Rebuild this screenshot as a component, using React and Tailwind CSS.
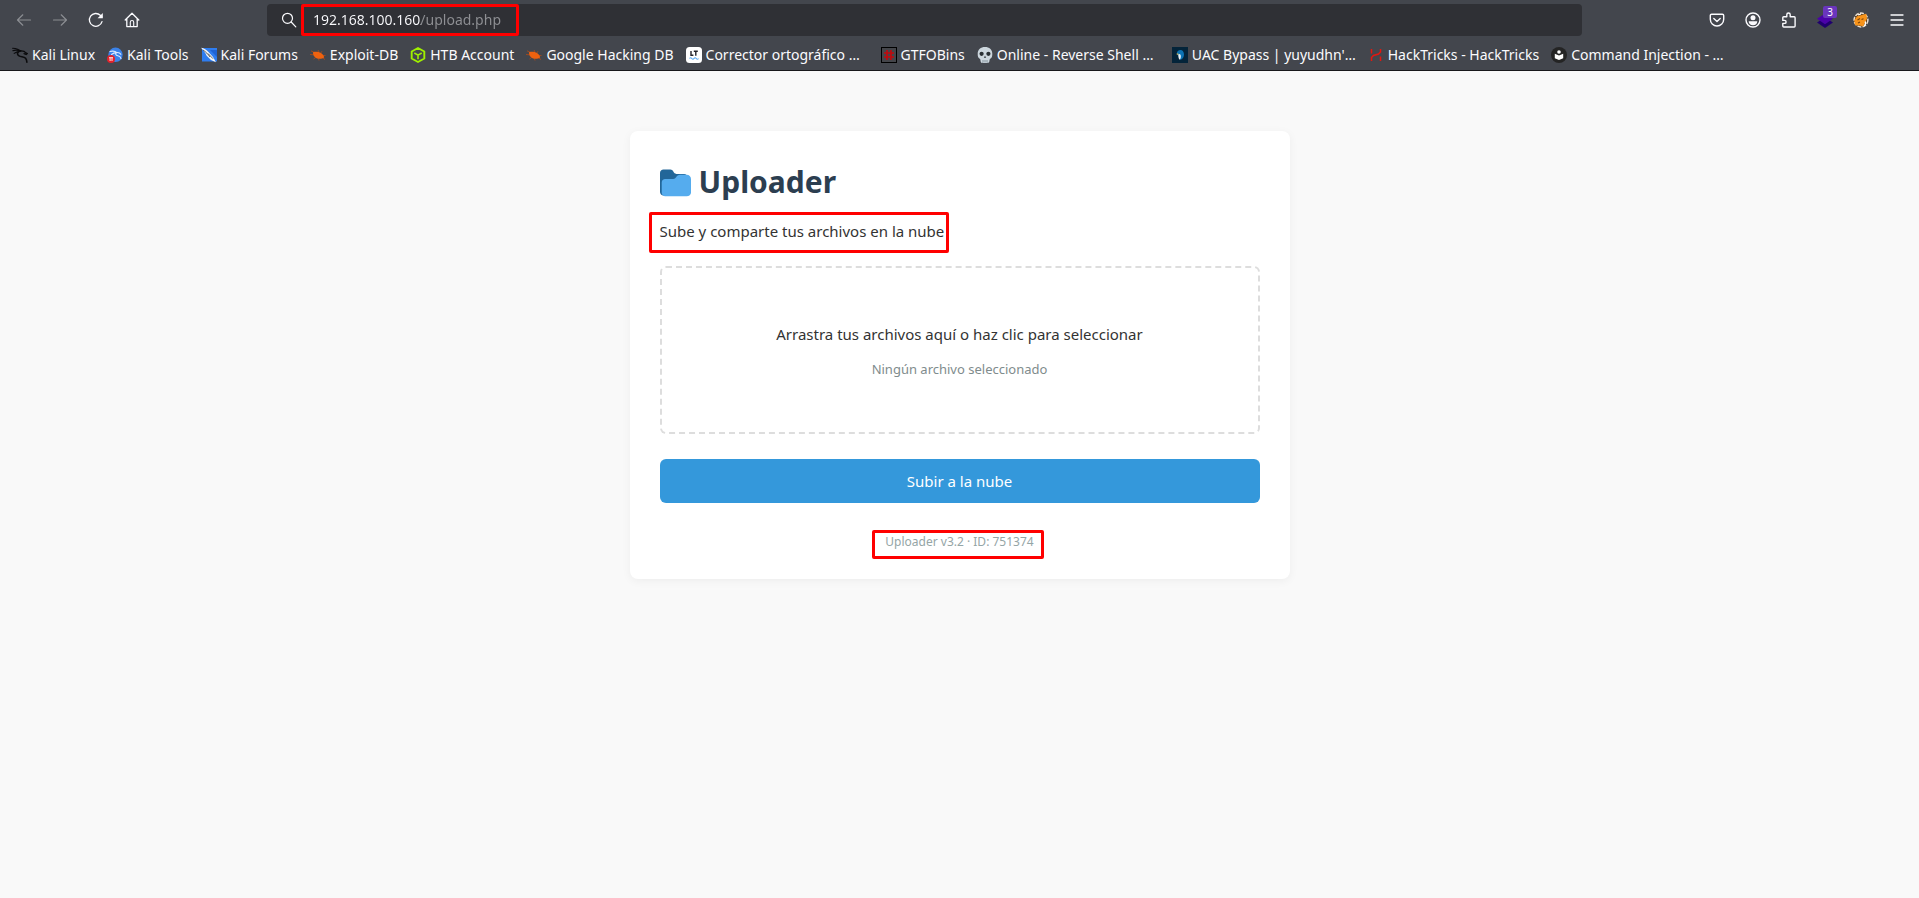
const svgProps = { width: 16, height: 16, viewBox: '0 0 16 16', fill: 'none', 'aria-hidden': true };
const line = { stroke: 'currentColor', strokeWidth: 1.2, strokeLinecap: 'round', strokeLinejoin: 'round' };

const BackIcon = () => (
  <svg {...svgProps} {...line}><path d="M14.500 8H1.500M6.800 2.800 1.500 8l5.300 5.200" /></svg>
);
const ForwardIcon = () => (
  <svg {...svgProps} {...line}><path d="M1.500 8h13M9.200 2.800 14.500 8l-5.300 5.200" /></svg>
);
const ReloadIcon = () => (
  <svg {...svgProps} {...line} strokeWidth={1.3}>
    <path d="M14 9.600A6.400 6.400 0 1 1 12.300 3.300L13.800 4.800" />
    <path d="M14.800 1v5.200H9.600z" fill="currentColor" stroke="none" />
  </svg>
);
const HomeIcon = () => (
  <svg {...svgProps} {...line} strokeWidth={1.3}>
    <path d="M1.200 8 8 1.200 14.800 8M2.800 6.800v7.800h10.400V6.800" />
    <path d="M6.300 14.400V10.200a1.700 1.700 0 0 1 3.400 0v4.200" strokeWidth={1.1} />
  </svg>
);
const SearchIcon = () => (
  <svg {...svgProps} {...line}><circle cx="6.500" cy="6.300" r="5" /><path d="m10.200 10 4.600 4.800" /></svg>
);
const PocketIcon = () => (
  <svg {...svgProps} {...line} strokeWidth={1.4}>
    <path d="M2.600 2.200h10.800a1.300 1.300 0 0 1 1.300 1.300v3.800a6.700 6.700 0 0 1-13.400 0V3.500a1.300 1.300 0 0 1 1.300-1.300z" />
    <path d="m4.800 6.400 3.200 3 3.200-3" />
  </svg>
);
const AccountIcon = () => (
  <svg {...svgProps}>
    <circle cx="8" cy="8" r="7" stroke="currentColor" strokeWidth="1.4" />
    <circle cx="8" cy="5.800" r="2.500" fill="currentColor" />
    <path d="M3.700 9.200h8.600c0 2.600-1.900 4-4.300 4s-4.300-1.400-4.300-4z" fill="currentColor" />
  </svg>
);
const ExtensionIcon = () => (
  <svg {...svgProps} {...line} strokeWidth={1.4}>
    <path d="M1.800 8.400V5.700a.9.9 0 0 1 .9-.9h3.100V2.700a1.700 1.700 0 0 1 3.400 0v2.100h4a.9.9 0 0 1 .9.9v8.400a.9.9 0 0 1-.9.9H2.700a.9.9 0 0 1-.9-.9v-2.700h1.800a1.500 1.500 0 0 0 0-3z" />
  </svg>
);
const LayersIcon = () => (
  <svg {...svgProps} overflow="visible">
    <path d="M8 5.500 16 10.500 8 16 0 10.500z" fill="#20006e" />
    <path d="M8 1.500 16 6.800 8 12.300 0 6.800z" fill="#4b02a8" />
  </svg>
);
const FoxIcon = () => (
  <svg {...svgProps}>
    <circle cx="8" cy="8" r="6.900" fill="#5a3a18" stroke="#e9dfd2" strokeWidth="1.500" strokeDasharray="4 1.200" />
    <path d="M1.200 8.500 4 4.200l5-1.200 4.300-1.200.7 4.600-1.800 4-2 3.800-4-.6-4-.4z" fill="#f7931a" />
    <path d="m4.500 8 2.500-1.500M8.500 7.500l2-.7M5 11l2-1" stroke="#7a430c" strokeWidth="1.100" />
    <path d="M12 9.500c1 1 .6 3-.8 4.200M5 3l3-1.200" stroke="#fff" strokeWidth="1.300" />
  </svg>
);
const MenuIcon = () => (
  <svg {...svgProps} {...line} strokeWidth={1.3}><path d="M2 3h12M2 8h12M2 13h12" /></svg>
);

const KaliLinuxIcon = () => (
  <svg {...svgProps} stroke="#0b0b0d" strokeLinecap="round">
    <path d="M.6 1.200C4 1.400 7 2.200 9 4.200M.8 3.700C3 3 6 3 8.600 4.200M2.200 6.400c1.600-1.200 3.400-1.800 5-1.800" strokeWidth="1.100" />
    <path d="M8.300 3.800C5.200 4.600 4.600 7.400 7 8.900c2 1.200 5 .4 6.600 2.300.8 1 1.200 2.300 1.300 4" strokeWidth="1.600" />
    <path d="M8.800 3.900c2.200-.2 4 .5 5 1.900l1.400.7-1 .9-2.200-.7" strokeWidth="1.300" />
  </svg>
);
const KaliToolsIcon = () => (
  <svg {...svgProps}>
    <circle cx="8.500" cy="7.800" r="7.200" fill="#3b82e8" />
    <path d="M3 4.500c3-.8 5.400-.2 7 1.200M4.500 7.500c2-1.600 4-2 5.500-1.800M9.500 5.500c-1.800 1.400-.6 3 1.300 3.300 1.600.3 2.800 1.200 3.200 2.900M10 5.500c1.600-.2 3 .4 3.800 1.800" stroke="#dbe9ff" strokeWidth="1.100" strokeLinecap="round" />
    <circle cx="4" cy="12" r="4" fill="#e3222b" />
    <path d="M2 10.700h4M3.100 10.900V14M5 10.900V14" stroke="#fff" strokeWidth=".9" />
  </svg>
);
const KaliForumsIcon = () => (
  <svg {...svgProps}>
    <path d="M1 1h15v13.500H1z" fill="#2f7df0" />
    <path d="M9 3h7v7z" fill="#1f63d4" />
    <path d="M0 .8c3 .5 5.500 2 7.500 4.200L12 10l3 5.200-5-2.200-4.500-4.500C4.500 6 2.500 3.500 0 .8z" fill="#f4f6f8" />
    <path d="M2 3c3 2 5 4.200 7 7M7 6.500l5 5.200" stroke="#23262d" strokeWidth=".7" />
  </svg>
);
const ExploitIcon = () => (
  <svg {...svgProps}>
    <path d="m1 3.800 3.500 1.700M0 7.500l3.500.3M3.500 12l2.200-1.500M8 3l1 2M12 4.200 10.800 6M15.500 8.500l-2.500.2M15 12.500l-2.500-1.600M9 13.500l-.4-1.600" stroke="#a84a1c" strokeWidth=".9" />
    <path d="M3 5.200c2.500-.8 5.600-.6 8 .9 1.700 1.100 2.900 2.500 3.100 4.300-1.700 1.500-5 1.900-7.600.9C4.400 10.300 2.700 8 3 5.200z" fill="#f0620f" />
  </svg>
);
const HtbIcon = () => (
  <svg {...svgProps} stroke="#9fef00" strokeWidth="1.900" strokeLinejoin="round">
    <path d="m8 1 6.300 3.500v7L8 15l-6.300-3.500v-7z" />
    <path d="M4.300 6 8 8.100 11.700 6M8 8.100v4.200" strokeWidth="1.600" />
  </svg>
);
const LanguageToolIcon = () => (
  <svg {...svgProps}>
    <rect width="16" height="16" rx="3.500" fill="#fff" />
    <path d="M5 4v4.300h2.400M7.800 4.300h4M9.800 4.300v4.500" stroke="#24242c" strokeWidth="1.400" />
    <path d="M3.500 11.500c.8-1 1.500-1 2.300 0s1.500 1 2.200 0 1.500-1 2.300 0 1.400 1 2.200 0" stroke="#58a9f5" strokeWidth="1.200" />
  </svg>
);
const GtfoIcon = () => (
  <svg {...svgProps}>
    <rect x=".5" y=".5" width="15" height="15" fill="#44454a" stroke="#000" />
    <path d="M6 3v10M10 3v10M3 6h10M3 10h10" stroke="#c4080c" strokeWidth="1.600" />
  </svg>
);
const SkullIcon = () => (
  <svg {...svgProps}>
    <path d="M8 0c4.300 0 7.300 2.700 7.300 6.600 0 1.600-.1 3-.7 4-.5.800-1.400 1-1.800 1.600-.5.700-.1 2.200-.8 3-.5.600-1.500.8-4 .8s-3.500-.2-4-.8c-.7-.8-.3-2.300-.8-3-.4-.6-1.300-.8-1.800-1.600-.6-1-.7-2.400-.7-4C.7 2.700 3.700 0 8 0z" fill="#ccd6dd" />
    <circle cx="4.600" cy="6.800" r="2.100" fill="#292f33" />
    <circle cx="11.400" cy="6.800" r="2.100" fill="#292f33" />
    <path d="m8 8.800 1.200 2H6.800z" fill="#292f33" />
    <path d="M6 13v2.500M8 13v2.500M10 13v2.500" stroke="#66757f" strokeWidth=".7" />
  </svg>
);
const UacIcon = () => (
  <svg {...svgProps}>
    <rect width="16" height="16" fill="#04243a" />
    <path d="M4.800 7C4.800 4.500 6.400 3 8.500 3S12 4.800 12 7.500 10.600 12 8.500 13L6.800 9.500z" fill="#0c73b4" />
    <path d="M6.400 7.200c1.400-.6 2.200.2 2.400 1.600.2 1.600-.2 3.200-1.100 4-1-1-1.500-2.600-1.300-5.600z" fill="#eef3f6" />
    <path d="m6.200 6.200-2 .9 2 .8z" fill="#f2b632" />
  </svg>
);
const HackTricksIcon = () => (
  <svg {...svgProps} stroke="#e3170f" strokeWidth="1.500">
    <path d="M3.500 2v4.500M3.500 14v-3.500l2-2 5-1.500 2-2V2M12.500 14V9.500" />
  </svg>
);
const BookIcon = () => (
  <svg {...svgProps}>
    <circle cx="8" cy="8" r="8" fill="#242424" />
    <circle cx="8" cy="5" r="1.800" fill="#fff" />
    <path d="M3.800 6.800 8 8.600l4.200-1.800v4.400L8 13l-4.200-1.800z" fill="#fff" />
  </svg>
);

const FolderIcon = () => (
  <svg className="size-[31px]" viewBox="0 0 36 36" aria-hidden="true">
    <path d="M0 29c0 2.200 1.800 4 4 4h24c2.200 0 4-1.800 4-4V12c0-2.200-1.800-4-4-4h-9c-3.600 0-3-5-7-5H4C1.800 3 0 4.800 0 7z" fill="#226699" />
    <path d="M31 9h-7.700c-4.400 0-4.600 5-8 5H6c-2.200 0-4 1.800-4 4v12c0 2.200 1.800 4 4 4h25c2.800 0 5-1.800 5-4V14c0-2.800-2.200-5-5-5z" fill="#55acee" />
  </svg>
);

const bookmarks = [
  { name: 'Kali Linux', Icon: KaliLinuxIcon },
  { name: 'Kali Tools', Icon: KaliToolsIcon },
  { name: 'Kali Forums', Icon: KaliForumsIcon },
  { name: 'Exploit-DB', Icon: ExploitIcon },
  { name: 'HTB Account', Icon: HtbIcon },
  { name: 'Google Hacking DB', Icon: ExploitIcon },
  { name: 'Corrector ortográfico …', Icon: LanguageToolIcon, long: true },
  { name: 'GTFOBins', Icon: GtfoIcon },
  { name: 'Online - Reverse Shell …', Icon: SkullIcon, long: true },
  { name: "UAC Bypass | yuyudhn'…", Icon: UacIcon, long: true },
  { name: 'HackTricks - HackTricks', Icon: HackTricksIcon },
  { name: 'Command Injection - …', Icon: BookIcon, long: true },
];

function ToolButton({ label, disabled, children }) {
  return (
    <button type="button" aria-label={label} disabled={disabled} className="relative flex h-8 w-9 items-center justify-center text-[#fbfbfe] disabled:text-[#8b8d92]">
      {children}
    </button>
  );
}

const Outline = ({ className }) => (
  <span aria-hidden="true" className={`pointer-events-none absolute rounded-[2px] border-3 border-[#ff0000] ${className}`} />
);

function BrowserChrome() {
  return (
    <header className="border-b border-[#18181c] bg-[#43464d] text-[#fbfbfe]">
      <div className="flex h-10 items-center pr-1 pl-1.5">
        <nav aria-label="Navegación" className="flex">
          <ToolButton label="Atrás" disabled><BackIcon /></ToolButton>
          <ToolButton label="Adelante" disabled><ForwardIcon /></ToolButton>
          <ToolButton label="Recargar"><ReloadIcon /></ToolButton>
          <ToolButton label="Inicio"><HomeIcon /></ToolButton>
        </nav>
        <div className="relative mx-[117px] flex h-8 flex-1 items-center gap-4 rounded bg-[#2f3035] px-3.5">
          <SearchIcon />
          <input
            aria-label="Dirección"
            defaultValue="192.168.100.160/upload.php"
            className="h-6 flex-1 bg-[linear-gradient(to_right,#fbfbfe_108px,#8f9094_108px)] bg-clip-text pb-0.5 text-sm text-transparent outline-none"
          />
          <Outline className="top-0 left-[34px] h-8 w-[218px]" />
        </div>
        <div className="flex">
          <ToolButton label="Guardar en Pocket"><PocketIcon /></ToolButton>
          <ToolButton label="Cuenta"><AccountIcon /></ToolButton>
          <ToolButton label="Extensiones"><ExtensionIcon /></ToolButton>
          <ToolButton label="Capas">
            <LayersIcon />
            <span className="absolute top-0.5 right-1.5 rounded-[2px] bg-[#6a35bd] px-1 text-[10px] leading-3 text-white">3</span>
          </ToolButton>
          <ToolButton label="Proxy"><FoxIcon /></ToolButton>
          <ToolButton label="Menú"><MenuIcon /></ToolButton>
        </div>
      </div>
      <nav aria-label="Marcadores" className="flex h-[30px] items-center gap-3 overflow-hidden px-3">
        {bookmarks.map(({ name, Icon, long }) => (
          <a key={name} href="#" className={`flex shrink-0 items-center gap-1 text-sm leading-5 ${long ? 'min-w-[183px]' : ''}`}>
            <Icon />
            <span>{name}</span>
          </a>
        ))}
      </nav>
    </header>
  );
}

export default function App() {
  return (
    <div className="flex min-h-screen flex-col bg-[#f9f9f9] font-['Noto_Sans',sans-serif]">
      <BrowserChrome />
      <main className="px-4 py-[60px]">
        <form onSubmit={(e) => e.preventDefault()} className="mx-auto max-w-[660px] rounded-lg bg-white px-[30px] pt-[30px] pb-[27px] text-[15px] leading-6 text-[#333333] shadow-[0_2px_10px_rgba(0,0,0,0.05)]">
          <h1 className="flex items-center gap-2 text-[30px] leading-[42px] font-bold text-[#2c3e50]">
            <FolderIcon />
            Uploader
          </h1>
          <div className="mt-4 flex">
            <p className="relative">
              Sube y comparte tus archivos en la nube
              <Outline className="-top-[7px] -right-[5px] -bottom-2.5 -left-[11px]" />
            </p>
          </div>
          <label className="mt-[23px] flex cursor-pointer flex-col gap-[13px] rounded-md border-2 border-dashed border-[#dddddd] px-5 pt-[54px] pb-[53px] text-center">
            <span>Arrastra tus archivos aquí o haz clic para seleccionar</span>
            <span className="text-[13px] leading-5 text-[#7f8c8d]">Ningún archivo seleccionado</span>
            <input type="file" multiple className="sr-only" />
          </label>
          <button type="submit" className="mt-[25px] w-full rounded-md bg-[#3498db] py-2.5 text-white">
            Subir a la nube
          </button>
          <footer className="mt-[29px] flex justify-center text-xs leading-5 text-[#95a5a6]">
            <p className="relative">
              Uploader v3.2 · ID: 751374
              <Outline className="-top-0.5 -right-2.5 -bottom-[7px] -left-[13px]" />
            </p>
          </footer>
        </form>
      </main>
    </div>
  );
}
